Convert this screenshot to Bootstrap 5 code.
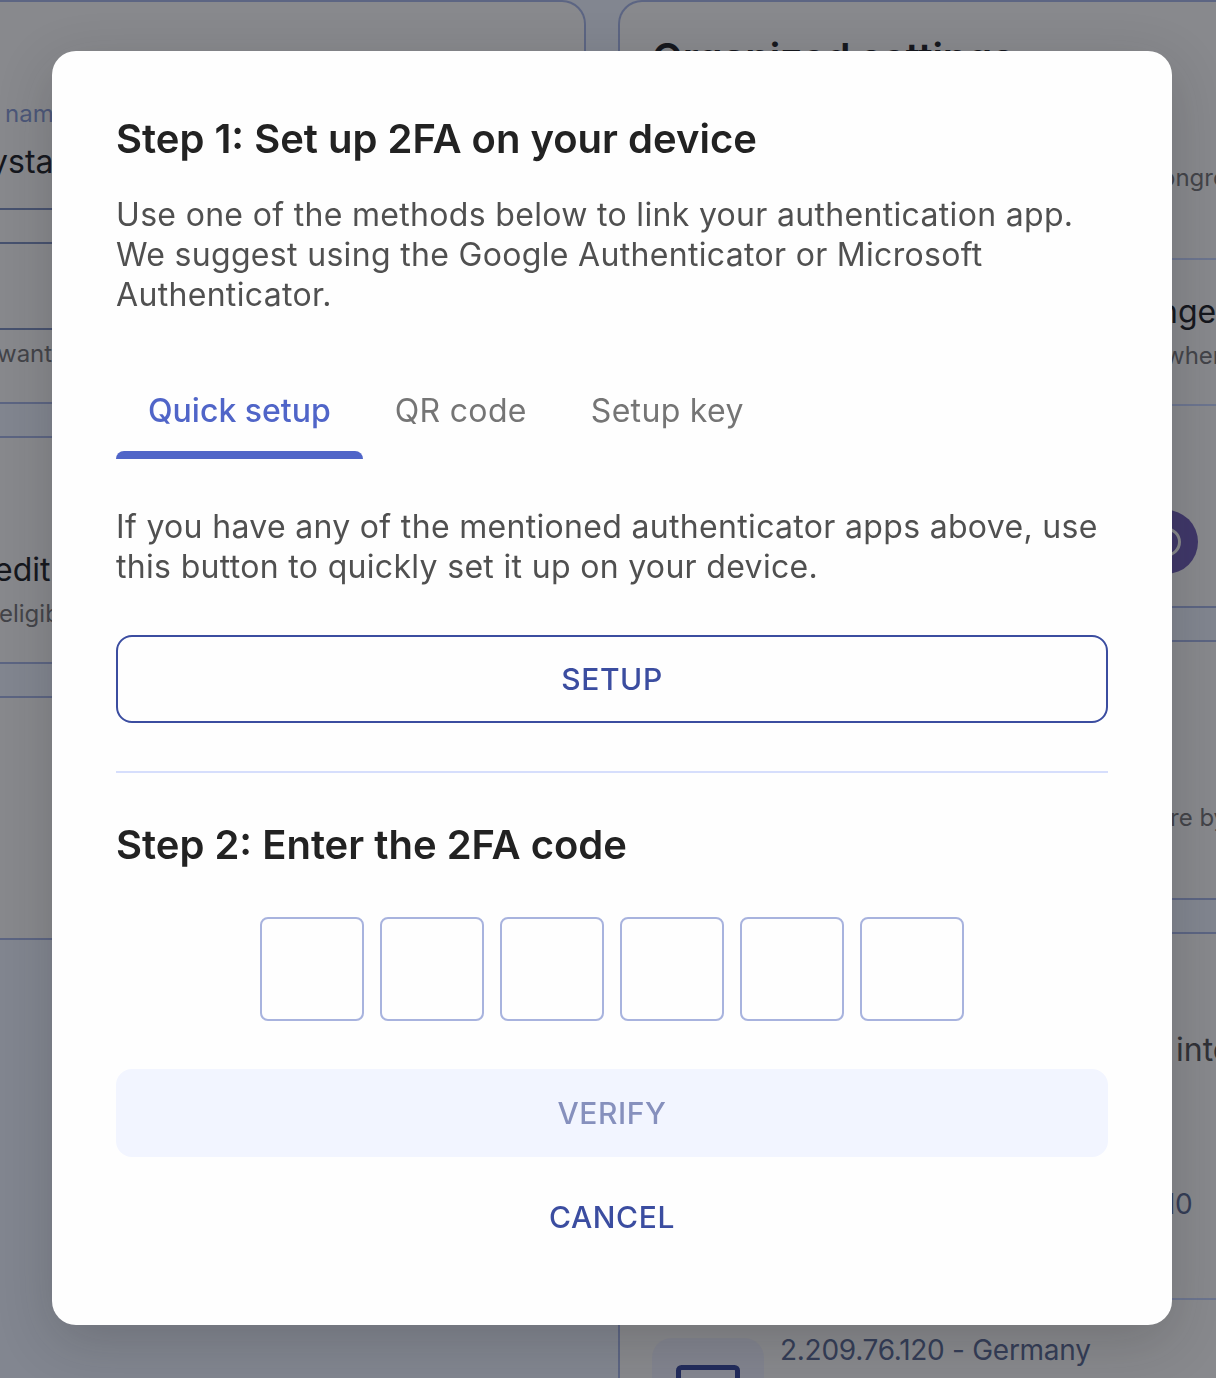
<!DOCTYPE html>
<html lang="en">
<head>
<meta charset="utf-8">
<meta name="viewport" content="width=device-width, initial-scale=1">
<title>Set up 2FA</title>
<link rel="stylesheet" href="https://cdn.jsdelivr.net/npm/bootstrap@5.3.0/dist/css/bootstrap.min.css">
<style>
body{font-family:Inter,"Liberation Sans",sans-serif;background:#828690;height:1378px;overflow:hidden}
.page-cols{height:1378px;gap:32px;overflow:hidden}
.col-profile{width:586px;flex:none}
.col-settings{width:598px;flex:none}
.panel{background:#88898d;border:2px solid #5c6583;overflow:hidden;white-space:nowrap;flex:none}
.col-profile .panel{border-left:0;border-radius:0 32px 32px 0}
.col-settings .panel{border-right:0;border-radius:32px 0 0 32px;padding-left:32px}
.col-settings .panel-first{border-radius:24px 0 0 24px}
.col-profile .panel-first{border-radius:0 24px 24px 0}
.field-box{border:solid #47526f;border-width:2px 2px 2px 0;border-radius:0 8px 8px 0;margin-right:32px}
.field-open{border-width:0 0 2px;border-radius:0}
.t-label{font-size:24px;line-height:32px;color:#4c5779}
.t-main{font-size:32px;line-height:40px;color:#15171d}
.t-hint{font-size:24px;line-height:32px;color:#434449}
.t-head{font-size:40px;line-height:48px;font-weight:600;color:#15171d;letter-spacing:-.1px}
.t-ip{font-size:28px;line-height:36px;color:#343d57;letter-spacing:-.28px}
.rule{height:2px;background:#6c758f}
.round-icon{width:64px;height:64px}
.device-tile{width:112px;height:112px;border-radius:20px;background:#82848f}
.dlg{max-width:1120px;margin:51px 0 0 52px}
.dlg .modal-content{height:1274px;padding:64px;border:0;border-radius:24px;background:#fefefe;box-shadow:0 16px 56px rgba(28,28,28,.2)}
.step-title{font-size:40px;line-height:48px;font-weight:600;color:#222;margin:0}
.step-text{font-size:32px;line-height:40px;color:#505050;letter-spacing:.32px;margin:0}
.setup-tabs{height:96px}
.setup-tabs .nav-link{padding:28px 32px 0;font-size:32px;line-height:40px;height:96px;color:#757575;letter-spacing:.32px;display:flex;flex-direction:column;justify-content:space-between}
.setup-tabs .nav-link.active{color:#5065c8;font-weight:500;letter-spacing:0}
.setup-tabs .active::after{content:"";height:8px;background:#5065c8;border-radius:8px 8px 0 0;margin:0 -32px}
.act{height:88px;border-radius:16px;border-width:2px;font-size:30px;font-weight:500;line-height:40px;letter-spacing:.6px;padding:0}
.act-outline,.act-outline:hover{border-color:#3b4da0;color:#3b4da0}
.act-muted,.act-muted:disabled{background:#f2f5ff;border-color:#f2f5ff;color:#8690bd;opacity:1}
.act-plain{color:#3b4da0;border-color:transparent}
.split{height:2px;background:#d6defc}
.digit{width:104px;height:104px;border:2px solid #a8b3de;border-radius:8px;background:transparent;padding:0;flex:none}
</style>
</head>
<body>
<div class="page-cols d-flex">
  <div class="col-profile d-flex flex-column" style="gap:32px">
    <div class="panel panel-first" style="height:404px">
      <div class="field-box field-open" style="height:208px;padding-top:96px">
        <div class="t-label" style="padding-left:5px">name</div>
        <div class="t-main" style="margin:12px 0 0 -10px">ysta</div>
      </div>
      <div class="field-box" style="height:88px;margin-top:32px"></div>
      <div class="t-hint" style="margin:8px 0 0 -3px">want</div>
    </div>
    <div class="panel" style="height:228px;padding-top:112px">
      <div class="t-main" style="margin-left:-6px">edit</div>
      <div class="t-hint" style="margin:8px 0 0 -1px">eligib</div>
    </div>
    <div class="panel" style="height:244px"></div>
  </div>
  <div class="col-settings d-flex flex-column" style="gap:32px">
    <div class="panel panel-first" style="height:608px;padding-top:32px">
      <div class="t-head">Organized settings</div>
      <div class="t-hint" style="margin:80px 0 0 509px">ongregation</div>
      <div class="rule" style="margin-top:64px"></div>
      <div class="t-main" style="margin:32px 0 0 507px">nge</div>
      <div class="t-hint" style="margin:8px 0 0 513px">when</div>
      <div class="rule" style="margin-top:32px"></div>
      <svg class="round-icon d-block" style="margin:104px 0 0 482px" viewBox="0 0 64 64"><circle cx="32" cy="32" r="32" fill="#3f3769"/><circle cx="32.5" cy="32" r="13" fill="none" stroke="#88898d" stroke-width="3"/></svg>
    </div>
    <div class="panel" style="height:260px;padding-top:160px">
      <div class="t-hint" style="margin-left:518px">re by</div>
    </div>
    <div class="panel" style="height:560px;padding-top:96px">
      <div class="t-main" style="margin-left:524px;color:#303137">into</div>
      <div class="t-ip" style="margin:116px 0 0 512px">10</div>
      <div class="rule" style="margin-top:76px"></div>
      <div class="d-flex" style="margin-top:38px;gap:16px">
        <div class="device-tile d-flex justify-content-center">
          <svg width="64" height="60" viewBox="0 0 64 60" style="margin-top:27px"><rect x="2.5" y="2.5" width="59" height="44" rx="3" fill="#858791" stroke="#222c5c" stroke-width="5"/><path d="M20 57h24" stroke="#222c5c" stroke-width="5"/></svg>
        </div>
        <div class="t-ip" style="margin-top:-6px">2.209.76.120 - Germany</div>
      </div>
    </div>
  </div>
</div>

<div class="modal d-block overflow-hidden" tabindex="-1" role="dialog" aria-modal="true">
  <div class="modal-dialog dlg">
    <div class="modal-content">
      <h1 class="step-title">Step 1: Set up 2FA on your device</h1>
      <p class="step-text" style="margin-top:32px">Use one of the methods below to link your authentication app.<br>We suggest using the Google Authenticator or Microsoft<br>Authenticator.</p>
      <nav class="nav setup-tabs flex-nowrap mt-5">
        <a class="nav-link active" href="#">Quick setup</a>
        <a class="nav-link" href="#">QR code</a>
        <a class="nav-link" href="#">Setup key</a>
      </nav>
      <p class="step-text text-nowrap mt-5">If you have any of the mentioned authenticator apps above, use<br>this button to quickly set it up on your device.</p>
      <button class="btn act act-outline w-100 mt-5" type="button">SETUP</button>
      <div class="split mt-5"></div>
      <h2 class="step-title mt-5">Step 2: Enter the 2FA code</h2>
      <div class="d-flex justify-content-center gap-3 mt-5">
        <input class="digit" aria-label="Digit 1"><input class="digit" aria-label="Digit 2"><input class="digit" aria-label="Digit 3"><input class="digit" aria-label="Digit 4"><input class="digit" aria-label="Digit 5"><input class="digit" aria-label="Digit 6">
      </div>
      <button class="btn act act-muted w-100 mt-5" type="button" disabled>VERIFY</button>
      <button class="btn act act-plain w-100 mt-3" type="button">CANCEL</button>
    </div>
  </div>
</div>
<script src="https://cdn.jsdelivr.net/npm/bootstrap@5.3.0/dist/js/bootstrap.bundle.min.js"></script>
</body>
</html>
